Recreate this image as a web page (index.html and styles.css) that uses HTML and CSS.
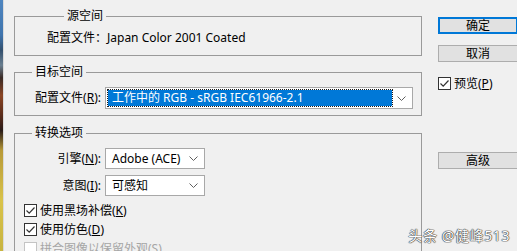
FILE: index.html
```html
<!DOCTYPE html>
<html lang="zh-CN">

<head>
    <meta charset="UTF-8">
    <meta name="viewport" content="width=device-width, initial-scale=1.0">
    <title>转换为配置文件</title>
    <link rel="stylesheet" href="styles.css">
</head>

<body>
    <div class="screen">
        <!-- Sliver of the photo behind the dialog -->
        <div class="photo-edge"></div>

        <div class="dialog">
            <!-- Left column: the three group boxes -->
            <div class="groups">
                <fieldset class="group group-source">
                    <legend>源空间</legend>
                    <div class="profile-line">配置文件：Japan Color 2001 Coated</div>
                </fieldset>

                <fieldset class="group group-target">
                    <legend>目标空间</legend>
                    <div class="field-grid">
                        <label class="field-label">配置文件(<u>R</u>):</label>
                        <div class="combo combo-wide">
                            <span class="combo-selected">工作中的 RGB - sRGB IEC61966-2.1</span>
                            <svg class="chevron" width="9" height="5" viewBox="0 0 9 5"><path d="M0.5 0.5 L4.5 4.5 L8.5 0.5" fill="none" stroke="#606060" stroke-width="1"/></svg>
                        </div>
                    </div>
                </fieldset>

                <fieldset class="group group-options">
                    <legend>转换选项</legend>
                    <div class="field-grid">
                        <label class="field-label">引擎(<u>N</u>):</label>
                        <div class="combo combo-small">
                            <span class="combo-text">Adobe (ACE)</span>
                            <svg class="chevron" width="9" height="5" viewBox="0 0 9 5"><path d="M0.5 0.5 L4.5 4.5 L8.5 0.5" fill="none" stroke="#606060" stroke-width="1"/></svg>
                        </div>
                        <label class="field-label">意图(<u>I</u>):</label>
                        <div class="combo combo-small">
                            <span class="combo-text">可感知</span>
                            <svg class="chevron" width="9" height="5" viewBox="0 0 9 5"><path d="M0.5 0.5 L4.5 4.5 L8.5 0.5" fill="none" stroke="#606060" stroke-width="1"/></svg>
                        </div>
                    </div>

                    <div class="check-list">
                        <div class="check-row">
                            <span class="check"><svg width="11" height="11" viewBox="0 0 11 11"><path d="M1.5 5.5 L4.2 8.2 L9.5 2.5" fill="none" stroke="#333" stroke-width="1.2"/></svg></span>
                            <span>使用黑场补偿(<u>K</u>)</span>
                        </div>
                        <div class="check-row">
                            <span class="check"><svg width="11" height="11" viewBox="0 0 11 11"><path d="M1.5 5.5 L4.2 8.2 L9.5 2.5" fill="none" stroke="#333" stroke-width="1.2"/></svg></span>
                            <span>使用仿色(<u>D</u>)</span>
                        </div>
                        <div class="check-row disabled">
                            <span class="check"></span>
                            <span>拼合图像以保留外观(<u>S</u>)</span>
                        </div>
                    </div>
                </fieldset>
            </div>

            <!-- Right column: dialog buttons -->
            <div class="actions">
                <button class="btn btn-default">确定</button>
                <button class="btn btn-cancel">取消</button>
                <div class="check-row preview">
                    <span class="check"><svg width="11" height="11" viewBox="0 0 11 11"><path d="M1.5 5.5 L4.2 8.2 L9.5 2.5" fill="none" stroke="#333" stroke-width="1.2"/></svg></span>
                    <span>预览(<u>P</u>)</span>
                </div>
                <button class="btn btn-advanced">高级</button>
            </div>
        </div>

        <div class="watermark">头条 @健峰513</div>
    </div>
</body>

</html>
```

FILE: styles.css
```css
/* Basic page setup */
body {
    margin: 0;
    background-color: #f0f0f0;
    color: #000000;
    font-family: 'Noto Sans', 'Noto Sans CJK SC', sans-serif;
    font-size: 12px;
    line-height: 16px;
}

.screen {
    position: relative;
    display: flex;
    width: 517px;
    height: 251px;
    overflow: hidden;
}

/* Photo peeking in on the left */
.photo-edge {
    flex: 0 0 3px;
    border-right: 1px solid #dadada;
    background: linear-gradient(to bottom, #4f86c0 0, #3f74ad 14%, #33506e 20%, #6a7f90 26%, #3a2a25 31%, #8a4524 38%, #5a2c1c 46%, #2a1c18 52%, #b89a38 60%, #d9c34a 80%, #c8b440 100%);
}

.dialog {
    display: flex;
    padding-left: 10px;
}

/* Group boxes */
.groups {
    width: 408px;
    padding-top: 8px;
}

.group {
    margin: 0;
    padding: 0;
    border: 1px solid #9a9a9a;
    min-width: 0;
}

.group legend {
    margin-left: 17px;
    padding: 0 3px;
    line-height: 16px;
}

.group-source {
    padding: 6px 0 9px 32px;
}

.group-target {
    margin-top: 8px;
    padding: 7px 0 6px 0;
}

.group-options {
    margin-top: 9px;
    padding: 7px 0 20px 0;
}

/* Label + combo rows */
.field-grid {
    display: grid;
    grid-template-columns: 86px auto;
    column-gap: 4px;
    row-gap: 6px;
    align-items: center;
    justify-content: start;
}

.field-label {
    text-align: right;
}

.combo {
    display: flex;
    align-items: center;
    box-sizing: border-box;
    background-color: #ffffff;
    border: 1px solid #a8a8a8;
}

.combo-wide {
    width: 308px;
    height: 22px;
    padding: 2px 0 2px 2px;
}

.combo-small {
    width: 100px;
    height: 21px;
    padding-left: 6px;
}

.combo-selected {
    flex: 1;
    height: 16px;
    padding-left: 4px;
    background-color: #0078d7;
    color: #ffffff;
    outline: 1px dotted #1a1a1a;
    white-space: nowrap;
    overflow: hidden;
}

.combo-text {
    flex: 1;
    white-space: nowrap;
}

.chevron {
    flex: 0 0 auto;
    margin: 0 6px 0 5px;
}

/* Checkboxes */
.check-list {
    padding: 5px 0 0 9px;
}

.check-row {
    display: flex;
    align-items: center;
    gap: 3px;
    height: 19px;
    white-space: nowrap;
}

.check {
    display: flex;
    align-items: center;
    justify-content: center;
    box-sizing: border-box;
    width: 13px;
    height: 13px;
    background-color: #ffffff;
    border: 1px solid #333333;
}

.check-row.disabled {
    color: #a6a6a6;
}

.check-row.disabled .check {
    border-color: #c4c4c4;
}

/* Dialog buttons */
.actions {
    display: flex;
    flex-direction: column;
    align-items: flex-start;
    margin-left: 16px;
    padding-top: 17px;
}

.btn {
    box-sizing: border-box;
    width: 80px;
    height: 17px;
    padding: 0;
    background-color: #e1e1e1;
    border: 1px solid #adadad;
    color: #000000;
    font: inherit;
    line-height: 14px;
}

.btn-default {
    border: 2px solid #0078d7;
}

.btn-cancel {
    margin-top: 11px;
}

.check-row.preview {
    margin-top: 12px;
}

.btn-advanced {
    margin-top: 59px;
}

/* Watermark over the bottom right corner */
.watermark {
    position: absolute;
    right: 7px;
    bottom: 7px;
    font-size: 14px;
    line-height: 16px;
    letter-spacing: 0.6px;
    color: #ffffff;
    text-shadow: 0 0 1px #444444, 0 0 1px #444444, 0 0 1px #444444, 0 0 1px #444444;
}
```
